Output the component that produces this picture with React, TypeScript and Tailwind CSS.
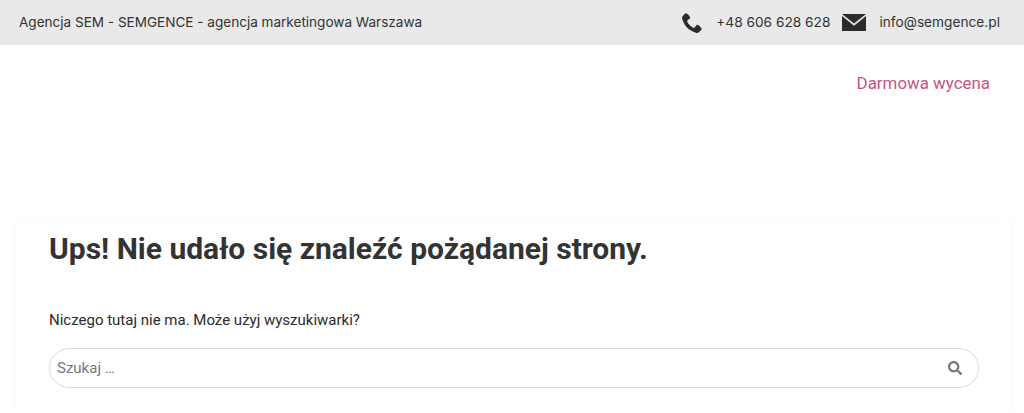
import { FaSearch } from "react-icons/fa";
import { ImPhone } from "react-icons/im";

function Envelope() {
  return (
    <svg width="24" height="17" viewBox="0 0 24 17" className="block">
      <path d="M0 0h24L12 9.6z" fill="#2b2b2b" />
      <path d="M0 2v15h24V2L12 11.7z" fill="#2b2b2b" />
    </svg>
  );
}

export default function App() {
  return (
    <div className="h-[413px] w-full overflow-hidden bg-white font-['Roboto',sans-serif]">
      <header className="flex h-[45px] items-center justify-between bg-[#e9e9e9] pl-[19px] pr-[24px] font-['Inter',sans-serif] text-[13.55px] text-[#333333]">
        <span>Agencja SEM - SEMGENCE - agencja marketingowa Warszawa</span>
        <div className="flex items-center text-[13.7px]">
          <ImPhone className="h-[21px] w-[21px] text-[#2b2b2b]" />
          <span className="ml-[13px]">+48 606 628 628</span>
          <span className="ml-[12px]"><Envelope /></span>
          <span className="ml-[13px]">info@semgence.pl</span>
        </div>
      </header>
      <nav className="flex h-[173px] justify-end pr-[34px] pt-[26px]">
        <a className="text-[16.9px] leading-[24px] text-[#c9537c]">Darmowa wycena</a>
      </nav>
      <main className="ml-[17px] mr-[14px] h-[195px] rounded-t-[4px] bg-white pl-[32px] pr-[31px] pt-[13px] shadow-[0_0_8px_rgba(0,0,0,0.03)]">
        <h1 className="text-[30px] font-bold leading-[36px] text-[#333333]">Ups! Nie udało się znaleźć pożądanej strony.</h1>
        <p className="mt-[41px] text-[15px] leading-[24px] text-[#2b2b2b]">Niczego tutaj nie ma. Może użyj wyszukiwarki?</p>
        <div className="mt-[16px] flex h-[40px] items-center justify-between rounded-full border border-[#d3dcdc] pl-[7px] pr-[16px]">
          <span className="text-[15px] text-[#777777]">Szukaj …</span>
          <FaSearch className="h-[14px] w-[14px] text-[#777777]" />
        </div>
      </main>
    </div>
  );
}
